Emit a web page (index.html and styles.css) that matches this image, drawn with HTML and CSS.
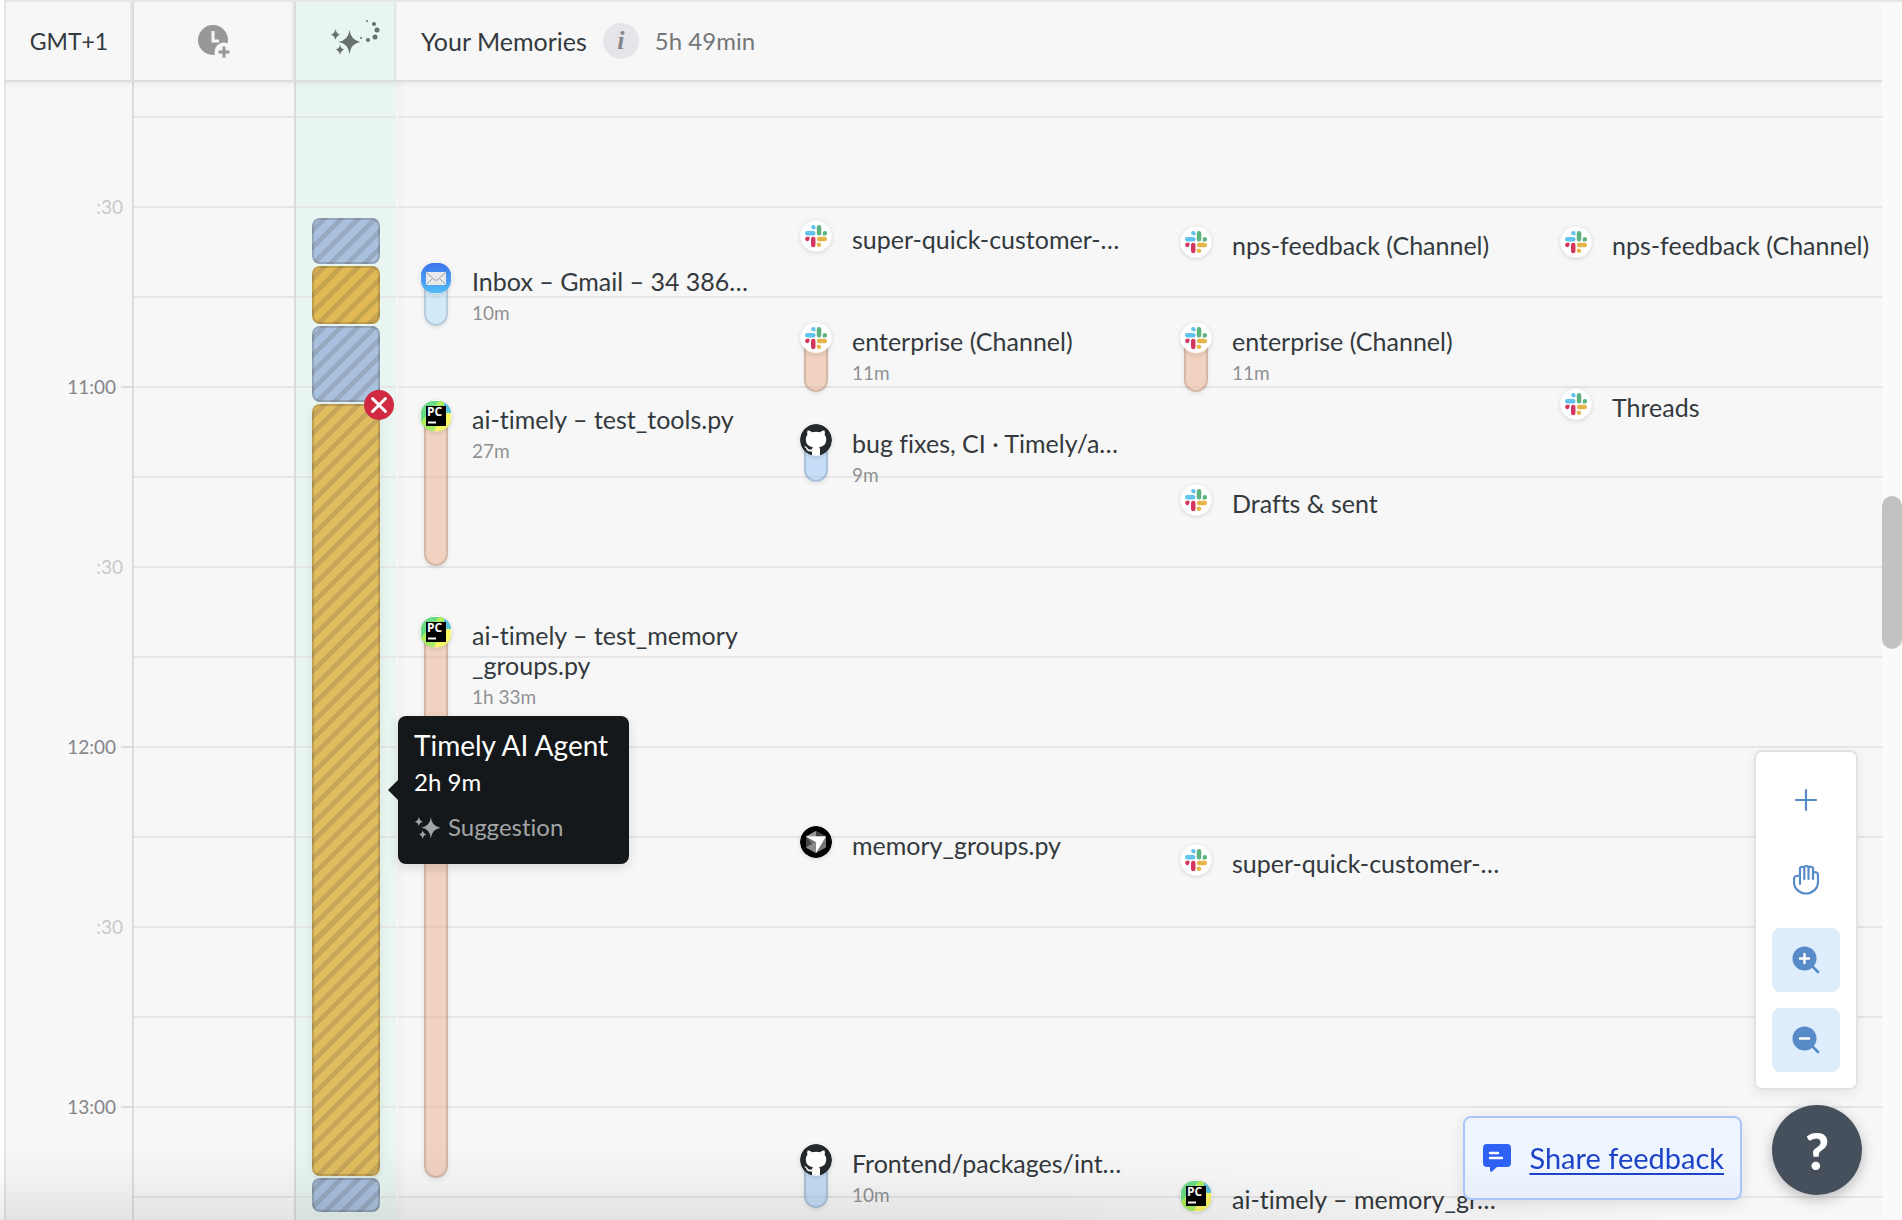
FILE: index.html
```
<!DOCTYPE html>
<html lang="en">
<head>
<meta charset="utf-8">
<title>Your Memories</title>
<link rel="stylesheet" href="styles.css">
</head>
<body>
<svg class="sprite" aria-hidden="true">
  <symbol id="slack" viewBox="0 0 32 32">
    <circle cx="16" cy="16" r="15" fill="#fff"/>
    <g fill="#62c3ec"><path d="M15.5 9.3h-2.3a2.2 2.2 0 1 1 2.3-2.3z"/><rect x="5" y="11" width="10.500" height="4.500" rx="2.200"/></g>
    <g fill="#5cb37f"><rect x="16.800" y="5" width="4.500" height="10.500" rx="2.200"/><path d="M22.700 15.500v-2.300a2.200 2.200 0 1 1 2.300 2.300z"/></g>
    <g fill="#d3365e"><path d="M9.500 16.800v2.300a2.200 2.200 0 1 1-2.300-2.300z"/><rect x="11" y="16.800" width="4.500" height="10.500" rx="2.200"/></g>
    <g fill="#e6b54a"><rect x="16.800" y="16.800" width="10.200" height="4.500" rx="2.200"/><path d="M16.800 22.700h2.300a2.200 2.200 0 1 1-2.300 2.300z"/></g>
  </symbol>
  <symbol id="github" viewBox="0 0 16 16">
    <circle cx="8" cy="8" r="7.900" fill="#fff"/>
    <path fill="#24292e" d="M8 0C3.580 0 0 3.580 0 8c0 3.540 2.290 6.530 5.470 7.590.4.070.55-.17.55-.38 0-.19-.01-.82-.01-1.490-2.010.37-2.530-.49-2.690-.94-.09-.23-.48-.94-.82-1.130-.28-.15-.68-.52-.01-.53.63-.01 1.080.58 1.230.82.72 1.210 1.870.87 2.330.66.070-.52.28-.87.51-1.070-1.780-.2-3.640-.89-3.640-3.950 0-.87.31-1.590.82-2.150-.08-.2-.36-1.020.08-2.120 0 0 .67-.21 2.200.82.64-.18 1.320-.27 2-.27s1.360.09 2 .27c1.530-1.040 2.200-.82 2.200-.82.44 1.100.16 1.920.08 2.120.51.56.82 1.270.82 2.150 0 3.070-1.870 3.750-3.650 3.950.29.25.54.73.54 1.480 0 1.070-.01 1.930-.01 2.200 0 .21.15.46.55.38A8.010 8.010 0 0 0 16 8c0-4.420-3.580-8-8-8z"/>
  </symbol>
  <symbol id="pycharm" viewBox="0 0 32 32">
    <clipPath id="pc-clip"><rect x="1" y="1" width="30" height="30" rx="12"/></clipPath>
    <g clip-path="url(#pc-clip)">
      <path fill="#6bdc86" d="M0 0h32v32H0z"/>
      <path fill="#b0ee58" d="M20 0h6l-4 8-18 18-4-3z"/>
      <path fill="#5bbfe0" d="M24 0h8v13l-8-1z"/>
      <path fill="#f8f566" d="M25 13h7v19H12l3-7z"/>
      <path fill="#a5ec60" d="M5 24h12l-3 8H3z"/>
    </g>
    <path d="M6 6h20v20H6z"/>
    <path fill="#fff" d="M8 21.500h8v2H8z"/>
  </symbol>
  <symbol id="mail" viewBox="0 0 32 32">
    <linearGradient id="mail-sky" x2="0" y2="1"><stop stop-color="#3b74eb"/><stop offset="1" stop-color="#52bcf6"/></linearGradient>
    <rect x="1" y="1" width="30" height="30" rx="12" fill="url(#mail-sky)"/>
    <rect x="6" y="10" width="20" height="13" rx="1" fill="#e9e9ec"/>
    <path d="M6.500 10.500l7.500 7a3 3 0 0 0 4 0l7.500-7M6.500 22.500l6-6M25.500 22.500l-6-6" fill="none" stroke="#9a9aa0"/>
  </symbol>
  <symbol id="cursor-app" viewBox="0 0 32 32">
    <circle cx="16" cy="16" r="16"/>
    <path fill="#777" d="M16 5l10 5.500v11L16 27 6 21.500v-11z"/>
    <path fill="#444" d="M16 5l10 5.500H6zM6 10.500V21.500l6-4z"/>
    <path fill="#999" d="M16 5v6l-10-.5z"/>
    <path fill="#8a8a8a" d="M6 21.500L16 27V16z"/>
    <path fill="#ccc" d="M6 10.500h20L16 16z"/>
    <path fill="#fff" d="M6 10.500h20L16 27V16z"/>
  </symbol>
  <symbol id="stars" viewBox="0 0 30 28">
    <path d="M19.500 3q1.200 10 11 12-9.800 1.500-11 12-1.200-10.500-11-12 9.800-2 11-12z"/>
    <path d="M5.500 2q.8 5 5 5.800-4.200.7-5 5.200-.8-4.500-5-5.200 4.200-.8 5-5.800z"/>
    <path d="M10 17.500q.7 4.500 4.500 5.200-3.800.7-4.500 5.300-.7-4.600-4.500-5.300 3.800-.7 4.500-5.200z"/>
  </symbol>
</svg>

<div class="app">
  <main class="planner">
    <header class="head">
      <div class="head-cell zone">GMT+1</div>
      <div class="head-cell">
        <svg width="34" height="34" viewBox="0 0 34 34" role="img" aria-label="Logged time">
          <circle cx="16" cy="16" r="15" fill="#97989a"/>
          <path d="M16 7v10h6" fill="none" stroke="#f7f7f7" stroke-width="3"/>
          <circle cx="27" cy="28" r="9.500" fill="#f7f7f7"/>
          <path d="M27 22.500v11M21.500 28h11" stroke="#97989a" stroke-width="3"/>
        </svg>
      </div>
      <div class="head-cell head-suggest">
        <svg width="56" height="44" viewBox="0 0 56 44" fill="#66706f" role="img" aria-label="Suggestions">
          <use href="#stars" x="0" y="10" width="30" height="28"/>
          <circle cx="37" cy="4" r="1"/><circle cx="44" cy="7" r="2"/><circle cx="47" cy="13" r="2.500"/><circle cx="45" cy="20" r="2.500"/><circle cx="38" cy="23" r="2"/><circle cx="31" cy="21" r="1"/>
        </svg>
      </div>
      <div class="head-memories">
        <h1>Your Memories</h1>
        <button class="info" type="button" aria-label="About memories">i</button>
        <span class="total">5h 49min</span>
      </div>
    </header>

    <!-- One grid row is one minute; row 1 is 10:09. -->
    <div class="day">
      <div class="hours">
        <span class="half" style="grid-row:22">:30</span>
        <span class="hour" style="grid-row:52">11:00</span>
        <span class="half" style="grid-row:82">:30</span>
        <span class="hour" style="grid-row:112">12:00</span>
        <span class="half" style="grid-row:142">:30</span>
        <span class="hour" style="grid-row:172">13:00</span>
      </div>
      <div class="logged"></div>
      <div class="suggestions">
        <div class="block blue" style="grid-row:24/span 8"></div>
        <div class="block gold" style="grid-row:32/span 10"></div>
        <div class="block blue" style="grid-row:42/span 13"></div>
        <div class="block gold active" style="grid-row:55/span 129">
          <button class="dismiss" type="button" aria-label="Dismiss suggestion">
            <svg width="30" height="30" viewBox="0 0 30 30"><path d="M8.500 8.500l13 13m0-13l-13 13" stroke="#fff" stroke-width="3" stroke-linecap="round"/></svg>
          </button>
          <div class="tooltip" role="tooltip">
            <strong>Timely AI Agent</strong>
            <span>2h 9m</span>
            <span class="kind"><svg width="26" height="24" fill="#a2a4a5"><use href="#stars"/></svg>Suggestion</span>
          </div>
        </div>
        <div class="block blue" style="grid-row:184/span 6"></div>
      </div>
      <div class="memories">
        <article class="memory c1" style="grid-row:32/span 10"><div class="bar sky"><svg><use href="#mail"/></svg></div><p>Inbox – Gmail – 34 386…<small>10m</small></p></article>
        <article class="memory c1" style="grid-row:55/span 27"><div class="bar peach"><svg><use href="#pycharm"/><text x="7" y="16">PC</text></svg></div><p>ai-timely – test_tools.py<small>27m</small></p></article>
        <article class="memory c1" style="grid-row:91/span 93"><div class="bar peach"><svg><use href="#pycharm"/><text x="7" y="16">PC</text></svg></div><p>ai-timely – test_memory<br>_groups.py<small>1h 33m</small></p></article>

        <article class="memory c2" style="grid-row:25/span 4"><div class="bar"><svg><use href="#slack"/></svg></div><p>super-quick-customer-…</p></article>
        <article class="memory c2" style="grid-row:42/span 11"><div class="bar peach"><svg><use href="#slack"/></svg></div><p>enterprise (Channel)<small>11m</small></p></article>
        <article class="memory c2" style="grid-row:59/span 9"><div class="bar azure"><svg><use href="#github"/></svg></div><p>bug fixes, CI · Timely/a…<small>9m</small></p></article>
        <article class="memory c2" style="grid-row:126/span 4"><div class="bar"><svg><use href="#cursor-app"/></svg></div><p>memory_groups.py</p></article>
        <article class="memory c2" style="grid-row:179/span 10"><div class="bar azure"><svg><use href="#github"/></svg></div><p>Frontend/packages/int…<small>10m</small></p></article>

        <article class="memory c3" style="grid-row:26/span 4"><div class="bar"><svg><use href="#slack"/></svg></div><p>nps-feedback (Channel)</p></article>
        <article class="memory c3" style="grid-row:42/span 11"><div class="bar peach"><svg><use href="#slack"/></svg></div><p>enterprise (Channel)<small>11m</small></p></article>
        <article class="memory c3" style="grid-row:69/span 4"><div class="bar"><svg><use href="#slack"/></svg></div><p>Drafts &amp; sent</p></article>
        <article class="memory c3" style="grid-row:129/span 4"><div class="bar"><svg><use href="#slack"/></svg></div><p>super-quick-customer-…</p></article>
        <article class="memory c3" style="grid-row:185/span 4"><div class="bar peach"><svg><use href="#pycharm"/><text x="7" y="16">PC</text></svg></div><p>ai-timely – memory_gr…</p></article>

        <article class="memory c4" style="grid-row:26/span 4"><div class="bar"><svg><use href="#slack"/></svg></div><p>nps-feedback (Channel)</p></article>
        <article class="memory c4" style="grid-row:53/span 4"><div class="bar"><svg><use href="#slack"/></svg></div><p>Threads</p></article>
      </div>
    </div>
  </main>
  <div class="scrollbar"><div class="thumb"></div></div>
</div>

<div class="fade"></div>

<div class="tools" role="toolbar" aria-label="Timeline tools">
  <button type="button" aria-label="Add"><svg width="28" height="28" viewBox="0 0 28 28"><path d="M14 4v20M4 14h20" stroke="#578bc8" stroke-width="2.200" stroke-linecap="round"/></svg></button>
  <button type="button" aria-label="Pan"><svg width="26" height="30" viewBox="0 0 26 30" fill="none" stroke="#578bc8" stroke-width="2.200" stroke-linecap="round"><path d="M7 19V4.500a2 2 0 0 1 4.300-1M11.300 14V3a2.100 2 0 0 1 4.200 0v11M15.500 3.500a2.200 2.200 0 0 1 4.500 1V14M20 7.500c2.500-1 5 0 5 2.500v7a12 11.500 0 0 1-24 0v-3c0-2.300 1.500-3.500 6-3.200"/></svg></button>
  <button class="on" type="button" aria-label="Zoom in"><svg width="28" height="28" viewBox="0 0 28 28"><circle cx="12.500" cy="12.500" r="12" fill="#578bc8"/><path d="M20 20l6 6" stroke="#578bc8" stroke-width="2.600" stroke-linecap="round"/><path d="M12.500 8v9M8 12.500h9" stroke="#fff" stroke-width="2.400" stroke-linecap="round"/></svg></button>
  <button class="on" type="button" aria-label="Zoom out"><svg width="28" height="28" viewBox="0 0 28 28"><circle cx="12.500" cy="12.500" r="12" fill="#578bc8"/><path d="M20 20l6 6" stroke="#578bc8" stroke-width="2.600" stroke-linecap="round"/><path d="M8 12.500h9" stroke="#fff" stroke-width="2.400" stroke-linecap="round"/></svg></button>
</div>

<div class="feedback">
  <svg width="28" height="28" viewBox="0 0 28 28"><path fill="#2e62f4" d="M4 0h20a4 4 0 0 1 4 4v15a4 4 0 0 1-4 4H14l-5 4.500q-2 1-2-1V23H4a4 4 0 0 1-4-4V4a4 4 0 0 1 4-4z"/><path d="M7 9h8M7 14h12" stroke="#fff" stroke-width="2.400" stroke-linecap="round"/></svg>
  <a href="#feedback">Share feedback</a>
</div>
<button class="help" type="button" aria-label="Help">?</button>
</body>
</html>
```
FILE: styles.css
```
* { box-sizing: border-box; }

:root {
  --line: #e6e6e6;
  --mint: rgba(61, 232, 175, .07);
  --columns: 130px 162px 102px 1fr;
}

body {
  margin: 0;
  overflow: hidden;
  background: #fff;
  color: #33393d;
  font: 25px/30px Lato, "Open Sans", sans-serif;
  font-variant-ligatures: none;
}

button {
  display: grid;
  place-items: center;
  padding: 0;
  border: 0;
  background: none;
  color: inherit;
  font: inherit;
  cursor: pointer;
}

.sprite { position: absolute; width: 0; height: 0; }

.app {
  display: flex;
  height: 100vh;
  padding-left: 4px;
}

.planner {
  flex: 1;
  min-width: 0;
  overflow: hidden;
  background: #f7f7f7;
}

/* Header */
.head {
  position: relative;
  z-index: 1;
  display: grid;
  grid-template-columns: var(--columns);
  height: 80px;
  border-top: 2px solid var(--line);
  background: #f7f7f7;
  box-shadow: 0 2px 0 #dedede, 0 4px 6px rgba(0, 0, 0, .06);
}

.head-cell {
  display: flex;
  align-items: center;
  justify-content: center;
  border-right: 2px solid #dcdcdc;
  box-shadow: inset -2px 0 0 #e9e9e9;
}

.zone {
  border-left: 2px solid var(--line);
  font-size: 23px;
}

.head-suggest {
  border-right-color: #f4f4f4;
  background: var(--mint);
  box-shadow: inset -2px 0 0 #dde8e5;
}

.head-suggest svg { margin-left: 24px; margin-bottom: 4px; }

.head-memories {
  display: flex;
  align-items: center;
  gap: 16px;
  padding-left: 23px;
}

.head-memories h1 { margin: 0; font: inherit; }

.info {
  width: 36px;
  height: 36px;
  border-radius: 50%;
  background: #e5e5ea;
  color: #85868a;
  font: italic 700 26px/36px "Liberation Serif", serif;
}

.total { color: #747779; font-size: 24px; }

/* Timeline */
.day {
  display: grid;
  grid-template-columns: var(--columns);
  height: 100%;
}

.hours, .suggestions, .memories {
  display: grid;
  grid-auto-rows: 6px;
}

.logged, .suggestions, .memories {
  background-image: repeating-linear-gradient(transparent 0 36px, var(--line) 36px 38px, transparent 38px 90px);
}

.hours {
  border-left: 2px solid var(--line);
  border-right: 2px solid #dcdcdc;
  font-size: 19px;
}

.hours span {
  display: flex;
  align-items: center;
  justify-content: flex-end;
  height: 30px;
  margin-top: -14px;
}

.half { padding-right: 9px; color: #c9c9cb; }

.hour { gap: 5px; color: #858689; }

.hour::after {
  content: "";
  width: 11px;
  height: 2px;
  background: #dcdcdc;
}

.logged { border-right: 2px solid #dcdcdc; }

.suggestions {
  border-right: 2px solid #f4f4f4;
  background-color: var(--mint);
  box-shadow: 2px 0 6px rgba(0, 0, 0, .04);
}

.block {
  margin: 0 16px 2px;
  border: 2px solid rgba(60, 50, 40, .2);
  border-radius: 8px;
  background-clip: border-box;
  background-origin: border-box;
  background-image: repeating-linear-gradient(135deg, transparent 0 7px, rgba(80, 70, 60, .18) 7px 12px);
}

.blue { background-color: #a8c1df; }
.gold { background-color: #e0b955; }
.gold.active { background-color: #e1bd60; }

.active {
  position: relative;
  box-shadow: 0 2px 8px rgba(0, 0, 0, .08);
}

.dismiss {
  position: absolute;
  top: -16px;
  right: -16px;
  width: 30px;
  height: 30px;
  border-radius: 50%;
  background: #cf2a41;
}

.tooltip {
  position: absolute;
  z-index: 2;
  top: 310px;
  left: 84px;
  display: flex;
  flex-direction: column;
  width: 231px;
  height: 148px;
  padding: 14px 16px;
  border-radius: 8px;
  background: #14181b;
  box-shadow: 0 4px 12px rgba(0, 0, 0, .12);
  color: #fff;
  font-size: 24px;
  white-space: nowrap;
}

.tooltip::before {
  content: "";
  position: absolute;
  top: 64px;
  left: -10px;
  border: solid transparent;
  border-width: 10px 10px 10px 0;
  border-right-color: #14181b;
}

.tooltip strong { font-size: 28px; font-weight: 400; }
.tooltip span { margin-top: 7px; }

.tooltip .kind {
  display: flex;
  align-items: center;
  gap: 8px;
  margin-top: 15px;
  color: #a2a4a5;
}

/* Memories */
.memories {
  grid-template-columns: repeat(4, 380px);
  min-width: 0;
}

.c1 { grid-column: 1; }
.c2 { grid-column: 2; }
.c3 { grid-column: 3; }
.c4 { grid-column: 4; }

.memory {
  display: flex;
  gap: 24px;
  padding-left: 26px;
}

.memory p { margin: 0; white-space: nowrap; }

.memory small {
  display: block;
  margin-top: 2px;
  color: #8f9193;
  font-size: 19px;
}

.bar {
  display: flex;
  justify-content: center;
  width: 24px;
  border-radius: 12px;
}

.bar svg {
  flex: none;
  width: 32px;
  height: 32px;
  margin-top: -4px;
  border-radius: 50%;
  box-shadow: 0 1px 4px rgba(0, 0, 0, .14);
}

.bar text {
  fill: #fff;
  font: 700 12px "Open Sans", sans-serif;
}

.sky, .azure, .peach { box-shadow: inset 0 0 0 2px rgba(0, 0, 0, .12), 0 2px 4px rgba(0, 0, 0, .08); }
.sky { background: rgba(173, 220, 247, .5); }
.azure { background: rgba(150, 196, 248, .5); }
.peach { background: rgba(235, 171, 138, .5); }

/* Scrollbar */
.scrollbar {
  display: grid;
  grid-template-rows: 495fr 153fr 572fr;
  width: 20px;
  border-top: 2px solid var(--line);
  background: #fafafa;
}

.thumb {
  grid-row: 2;
  border-radius: 10px;
  background: #c2c2c2;
}

/* Floating controls */
.fade {
  position: fixed;
  inset: auto 0 0;
  height: 76px;
  background: linear-gradient(transparent, rgba(0, 0, 0, .02) 40%, rgba(0, 0, 0, .08));
  mask-image: linear-gradient(to right, #000 55%, transparent 88%);
  pointer-events: none;
}

.tools {
  position: fixed;
  right: 44px;
  bottom: 130px;
  display: grid;
  gap: 16px;
  padding: 16px;
  border: 2px solid #e2e2e2;
  border-radius: 8px;
  background: rgba(255, 255, 255, .92);
  box-shadow: 0 4px 12px rgba(0, 0, 0, .07);
}

.tools button {
  width: 68px;
  height: 64px;
  border-radius: 8px;
}

.tools .on { background: #deedfb; }

.feedback {
  position: fixed;
  right: 160px;
  bottom: 20px;
  display: flex;
  align-items: center;
  gap: 18px;
  height: 84px;
  padding: 0 16px 0 18px;
  border: 2px solid #abc5f8;
  border-radius: 8px;
  background: linear-gradient(#eef5ff 60%, #e8eef9);
  box-shadow: 0 4px 16px rgba(0, 0, 0, .1);
  font-size: 29px;
}

.feedback a {
  color: #1d44c8;
  text-decoration-thickness: 2px;
  text-underline-offset: 4px;
}

.help {
  position: fixed;
  right: 40px;
  bottom: 25px;
  width: 90px;
  height: 90px;
  border-radius: 50%;
  background: #46505d;
  box-shadow: 0 4px 14px rgba(0, 0, 0, .25);
  color: #fff;
  font-size: 52px;
  font-weight: 900;
}
```
